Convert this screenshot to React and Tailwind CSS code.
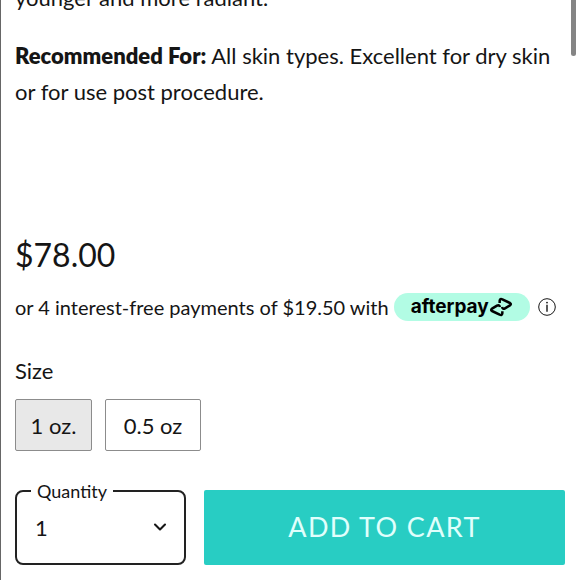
import { useState } from "react";
import { ChevronDown } from "lucide-react";

const sizes = [
  { value: "1", label: "1 oz.", width: "w-[77px]" },
  { value: "0.5", label: "0.5 oz", width: "w-24" },
];

function AfterpayBadge() {
  return (
    <span className="ml-[5px] flex h-7 w-34 items-center justify-center rounded-full bg-[#b2fce4] text-black">
      <span className="font-[Inter,sans-serif] text-[19px] leading-7 font-bold">afterpay</span>
      <svg viewBox="5 7 72 60" className="h-5 w-6" fill="none" stroke="currentColor" strokeWidth="7.5" strokeLinejoin="round" aria-hidden="true">
        <path d="M37 25V18Q38 11 45 14L68 25Q73 28 68 32L53 41Q46 45 44 37" />
        <path d="M45 50V56Q44 63 37 60L14 49Q9 46 14 42L29 33Q36 29 38 37" />
      </svg>
    </span>
  );
}

function InfoIcon() {
  return (
    <svg viewBox="0 0 18 18" className="size-4.5" fill="none" stroke="currentColor" aria-hidden="true">
      <circle cx="9" cy="9" r="8.3" strokeWidth="1" />
      <path d="M9 6.8V13.8" strokeWidth="1.4" />
      <circle cx="9" cy="4.6" r="0.9" fill="currentColor" stroke="none" />
    </svg>
  );
}

export default function App() {
  const [size, setSize] = useState("1");
  const [quantity, setQuantity] = useState("1");

  return (
    <div className="relative min-h-screen overflow-hidden border-l border-[#666] bg-white pr-[15px] pl-3.5 font-[Lato,sans-serif] text-[#151515]">
      <div className="absolute top-0 right-1 h-14 w-[5px] rounded-b-full bg-[#858585]" />

      <div className="-mt-5 space-y-[22px] text-[22px] leading-9">
        <p>younger and more radiant.</p>
        <p>
          <strong className="font-extrabold">Recommended For:</strong> All skin types. Excellent for dry skin or for use post procedure.
        </p>
      </div>

      <p className="mt-[125px] text-[32px] leading-10">$78.00</p>

      <div className="mt-4 flex items-center text-xl leading-8 whitespace-nowrap">
        <span>or 4 interest-free payments of $19.50 with</span>
        <AfterpayBadge />
        <button type="button" aria-label="Payment details" className="ml-2">
          <InfoIcon />
        </button>
      </div>

      <fieldset className="mt-8">
        <legend className="text-[22px] leading-8">Size</legend>
        <div className="mt-3 flex gap-[13px]">
          {sizes.map((item) => (
            <label
              key={item.value}
              className={`flex h-13 cursor-pointer items-center justify-center rounded-xs border border-[#8c8c8c] text-[22px] has-checked:bg-[#e8e8e8] ${item.width}`}
            >
              <input
                type="radio"
                name="size"
                value={item.value}
                checked={size === item.value}
                onChange={() => setSize(item.value)}
                className="sr-only"
              />
              {item.label}
            </label>
          ))}
        </div>
      </fieldset>

      <div className="mt-7 flex items-end gap-4.5">
        <fieldset className="w-[171px] rounded-lg border-2 border-[#222] px-3.5">
          <legend className="px-1.5 text-lg leading-6">
            <label htmlFor="quantity">Quantity</label>
          </legend>
          <div className="mb-3 grid h-12 items-center">
            <select
              id="quantity"
              value={quantity}
              onChange={(e) => setQuantity(e.target.value)}
              className="col-start-1 row-start-1 h-full w-full appearance-none bg-transparent pl-1 text-[22px] outline-none"
            >
              <option>1</option>
              <option>2</option>
              <option>3</option>
              <option>4</option>
            </select>
            <ChevronDown className="pointer-events-none col-start-1 row-start-1 size-5 justify-self-end" strokeWidth={2.5} aria-hidden="true" />
          </div>
        </fieldset>
        <button type="button" className="h-[75px] flex-1 rounded-xs bg-[#28cdc3] text-[27px] tracking-wider text-[#e0fffc]">
          ADD TO CART
        </button>
      </div>
    </div>
  );
}
